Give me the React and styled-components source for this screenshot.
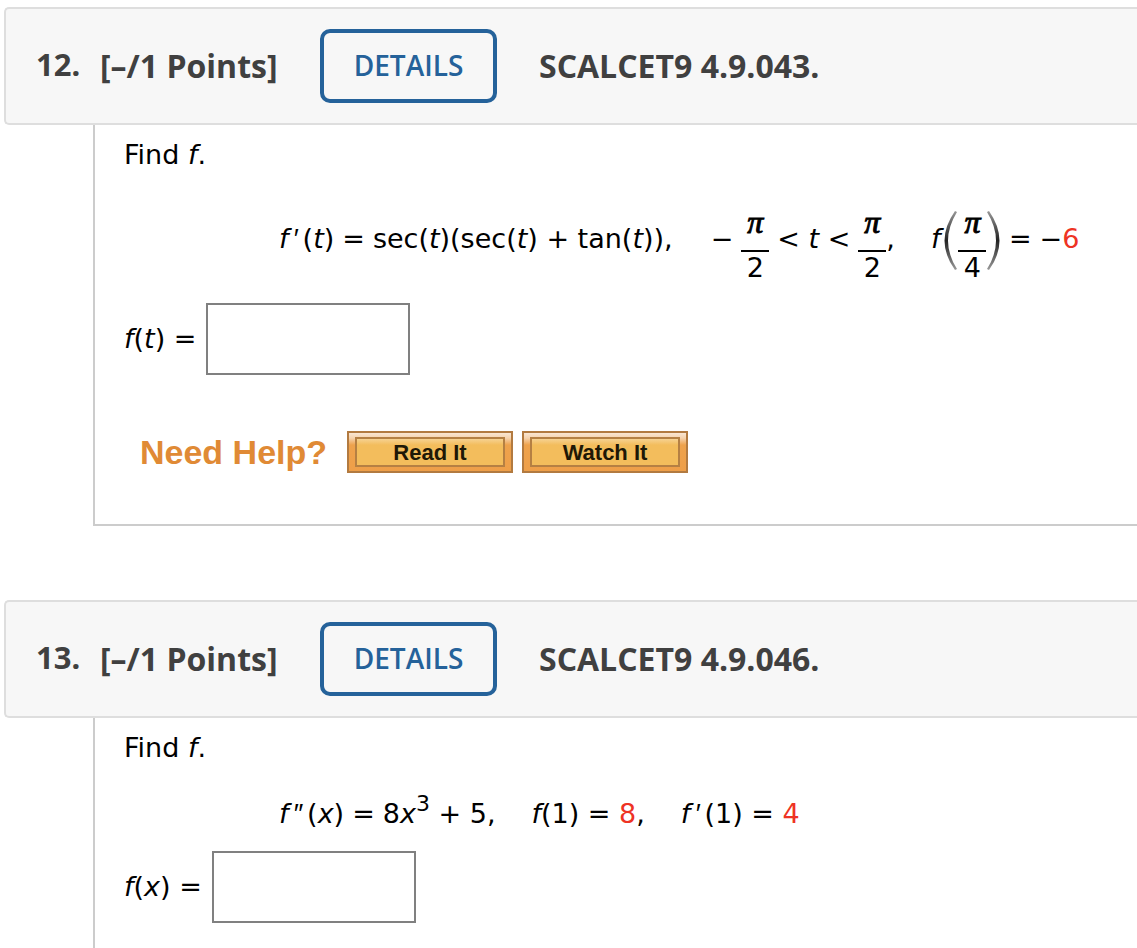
import React from "react";
import styled, { createGlobalStyle, css } from "styled-components";

const GlobalStyle = createGlobalStyle`
  * { box-sizing: border-box; }
  body {
    margin: 0;
    background: #fff;
    color: #000;
    font-family: Verdana, "DejaVu Sans", sans-serif;
    font-size: 27px;
    line-height: 32px;
    overflow-x: hidden;
  }
`;

const Page = styled.main`
  padding: 7px 0 0 4px;
`;

const Question = styled.section`
  margin-bottom: 74px;
`;

const Header = styled.header`
  display: flex;
  align-items: center;
  height: 118px;
  padding-left: 30px;
  border: 2px solid #dedede;
  border-right: 0;
  border-radius: 5px 0 0 5px;
  background: #f7f7f7;
  color: #404040;
  font-family: "Open Sans", sans-serif;
  font-size: 32px;
  font-weight: 700;
  line-height: 44px;
  white-space: nowrap;
`;

const Number = styled.span`
  width: 64px;
  padding-bottom: 4px;
  font-family: "Noto Sans", sans-serif;
  font-size: 31px;
`;

const Points = styled.span`
  width: 220px;
`;

const DetailsButton = styled.button`
  width: 177px;
  height: 74px;
  margin-right: 42px;
  padding: 0 0 2px;
  border: 4px solid #25629a;
  border-radius: 10px;
  background: transparent;
  color: #25629a;
  font: 600 28px "Open Sans", sans-serif;
`;

const Body = styled.div`
  margin-left: 89px;
  padding: 14px 0 51px 29px;
  border-left: 2px solid #ccc;
  border-bottom: 2px solid #ccc;
`;

const Prompt = styled.p`
  margin: 0;
`;

const Equation = styled.div`
  display: flex;
  align-items: flex-start;
  min-height: 34px;
  margin: 34px 0 19px 155px;
  white-space: pre;
  ${(p) => p.$tall && css`
    & > span { padding-top: 18px; }
  `}
`;

const Term = styled.span`
  margin-right: ${(p) => p.$gap || 0}px;
`;

const Prime = styled.i`
  margin: 0 5px 0 4px;
  font-family: "Liberation Sans", Arial, sans-serif;
  line-height: 0;
`;

const Sup = styled.sup`
  font-size: 22px;
  line-height: 0;
  vertical-align: 12px;
`;

const Value = styled.span`
  color: #ee3324;
`;

const FractionBox = styled.div`
  display: flex;
  flex-direction: column;
  align-items: center;
  width: 28px;
  margin-right: ${(p) => p.$gap || 0}px;
`;

const Numerator = styled.div`
  height: 45px;
  font: italic 400 32px/34px "Liberation Serif", serif;
  -webkit-text-stroke: 1px #000;
`;

const Denominator = styled.div`
  align-self: stretch;
  border-top: 2px solid #000;
  text-align: center;
`;

const Paren = styled.svg`
  width: 14px;
  height: 60px;
  margin-top: 6px;
`;

const Answer = styled.div`
  display: flex;
  align-items: center;
  gap: 10px;
`;

const AnswerInput = styled.input`
  width: 204px;
  height: 72px;
  padding: 0 12px;
  border: 2px solid #808080;
  background: #fff;
  font: inherit;
`;

const Help = styled.div`
  display: flex;
  align-items: center;
  gap: 9px;
  margin-top: 56px;
  padding-left: 16px;
`;

const HelpTitle = styled.span`
  width: 198px;
  color: #e08a35;
  font: 700 34px/40px "Liberation Sans", Arial, sans-serif;
`;

const HelpButton = styled.button`
  width: 166px;
  height: 42px;
  padding: 4px 6px;
  border: 2px solid #b27a40;
  background: linear-gradient(#f9e6d2 0, #f6d3ae 5px, #eea24c 12px, #ee9f49);
`;

const HelpFace = styled.span`
  display: block;
  padding-top: 2px;
  border: 2px solid #b58043;
  background: linear-gradient(#f6d291, #f3bd5c 6px);
  color: #1e1806;
  font: 700 22px/24px "Liberation Sans", Arial, sans-serif;
`;

function Fraction({ bottom, gap }) {
  return (
    <FractionBox $gap={gap}>
      <Numerator>π</Numerator>
      <Denominator>{bottom}</Denominator>
    </FractionBox>
  );
}

function BigParen({ close }) {
  const id = close ? "paren-close" : "paren-open";
  return (
    <Paren viewBox="0 0 14 60" aria-hidden="true">
      <defs>
        <linearGradient id={id} x1="0" y1="0" x2="0" y2="1">
          <stop offset="0" stopColor="#999" />
          <stop offset="0.5" stopColor="#222" />
          <stop offset="1" stopColor="#999" />
        </linearGradient>
      </defs>
      <path
        transform={close ? "translate(14 0) scale(-1 1)" : undefined}
        d="M11 0 Q-10 30 11 59 L13 58 Q-5 30 13 1Z"
        fill={`url(#${id})`}
      />
    </Paren>
  );
}

function QuestionCard({ number, code, equation, variable, help }) {
  const id = `answer-${number}`;
  return (
    <Question>
      <Header>
        <Number>{number}.</Number>
        <Points>[–/1 Points]</Points>
        <DetailsButton type="button">DETAILS</DetailsButton>
        <span>{code}</span>
      </Header>
      <Body>
        <Prompt>Find <i>f</i>.</Prompt>
        {equation}
        <Answer>
          <label htmlFor={id}><i>f</i>(<i>{variable}</i>) =</label>
          <AnswerInput id={id} type="text" />
        </Answer>
        {help && (
          <Help>
            <HelpTitle>Need Help?</HelpTitle>
            <HelpButton type="button"><HelpFace>Read It</HelpFace></HelpButton>
            <HelpButton type="button"><HelpFace>Watch It</HelpFace></HelpButton>
          </Help>
        )}
      </Body>
    </Question>
  );
}

const secantEquation = (
  <Equation $tall>
    <Term $gap={8}><i>f</i><Prime>′</Prime>(<i>t</i>)</Term>
    <Term $gap={8}>=</Term>
    <Term $gap={38}>sec(<i>t</i>)(sec(<i>t</i>) + tan(<i>t</i>)),</Term>
    <Term $gap={8}>−</Term>
    <Fraction bottom="2" gap={8} />
    <Term $gap={8}>&lt; <i>t</i> &lt;</Term>
    <Fraction bottom="2" />
    <Term $gap={36}>,</Term>
    <Term $gap={4}><i>f</i></Term>
    <BigParen />
    <Fraction bottom="4" />
    <BigParen close />
    <Term $gap={8}> =</Term>
    <Term>−<Value>6</Value></Term>
  </Equation>
);

const cubicEquation = (
  <Equation>
    <Term $gap={8}><i>f</i><Prime>″</Prime>(<i>x</i>)</Term>
    <Term $gap={8}>=</Term>
    <Term $gap={36}>8<i>x</i><Sup>3</Sup> + 5,</Term>
    <Term $gap={36}><i>f</i>(1) = <Value>8</Value>,</Term>
    <Term><i>f</i><Prime>′</Prime>(1) = <Value>4</Value></Term>
  </Equation>
);

export default function App() {
  return (
    <>
      <GlobalStyle />
      <Page>
        <QuestionCard number={12} code="SCALCET9 4.9.043." equation={secantEquation} variable="t" help />
        <QuestionCard number={13} code="SCALCET9 4.9.046." equation={cubicEquation} variable="x" />
      </Page>
    </>
  );
}
